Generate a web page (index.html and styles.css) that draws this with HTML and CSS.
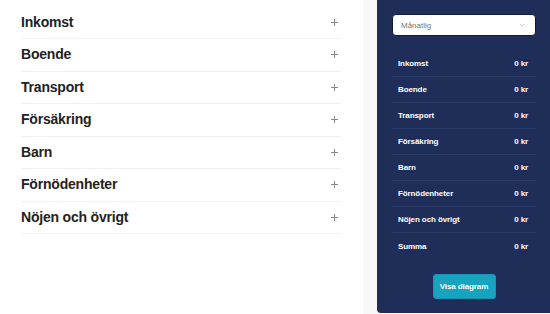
FILE: index.html
```html
<!DOCTYPE html>
<html lang="sv">
<head>
<meta charset="utf-8">
<link rel="stylesheet" href="styles.css">
</head>
<body>
<div class="layout">
  <main class="categories">
    <div class="category"><span>Inkomst</span><svg class="plus" viewBox="0 0 7 7"><path d="M3.5 0v7M0 3.5h7"/></svg></div>
    <div class="category"><span>Boende</span><svg class="plus" viewBox="0 0 7 7"><path d="M3.5 0v7M0 3.5h7"/></svg></div>
    <div class="category"><span>Transport</span><svg class="plus" viewBox="0 0 7 7"><path d="M3.5 0v7M0 3.5h7"/></svg></div>
    <div class="category"><span>Försäkring</span><svg class="plus" viewBox="0 0 7 7"><path d="M3.5 0v7M0 3.5h7"/></svg></div>
    <div class="category"><span>Barn</span><svg class="plus" viewBox="0 0 7 7"><path d="M3.5 0v7M0 3.5h7"/></svg></div>
    <div class="category"><span>Förnödenheter</span><svg class="plus" viewBox="0 0 7 7"><path d="M3.5 0v7M0 3.5h7"/></svg></div>
    <div class="category"><span>Nöjen och övrigt</span><svg class="plus" viewBox="0 0 7 7"><path d="M3.5 0v7M0 3.5h7"/></svg></div>
  </main>
  <aside class="sidebar">
    <div class="summary">
      <div class="period">
        <span>Månatlig</span>
        <svg class="chevron" viewBox="0 0 8 5"><path d="M1 1l3 3 3-3"/></svg>
      </div>
      <ul class="totals">
        <li><span>Inkomst</span><span>0 kr</span></li>
        <li><span>Boende</span><span>0 kr</span></li>
        <li><span>Transport</span><span>0 kr</span></li>
        <li><span>Försäkring</span><span>0 kr</span></li>
        <li><span>Barn</span><span>0 kr</span></li>
        <li><span>Förnödenheter</span><span>0 kr</span></li>
        <li><span>Nöjen och övrigt</span><span>0 kr</span></li>
        <li class="sum"><span>Summa</span><span>0 kr</span></li>
      </ul>
      <div class="actions">
        <button class="chart-btn">Visa diagram</button>
      </div>
    </div>
  </aside>
</div>
</body>
</html>
```

FILE: styles.css
```css
body {
    margin: 0;
    font-family: 'Liberation Sans', Arial, sans-serif;
    color: #222;
    background: #fff;
}
.layout {
    display: flex;
    height: 314px;
}

/* left list of categories */
.categories {
    width: 320px;
    padding: 6.5px 22px 0 21px;
}
.category {
    display: flex;
    align-items: center;
    justify-content: space-between;
    padding: 7.25px 0;
    line-height: 17px;
    border-bottom: 1px solid #f0f0f0;
    font-size: 14px;
    font-weight: bold;
    letter-spacing: -0.2px;
    color: #222;
}
.plus {
    width: 7px;
    height: 7px;
    margin-right: 3px;
    stroke: #888;
    stroke-width: 1;
    fill: none;
}

/* right summary panel */
.sidebar {
    flex: 1;
    background: #f8f8f8;
    padding-left: 14px;
}
.summary {
    height: 313px;
    box-sizing: border-box;
    background: #1f2e59;
    border-bottom-left-radius: 4px;
    padding: 14px 14px 0 15px;
    color: #fff;
}
.period {
    display: flex;
    align-items: center;
    justify-content: space-between;
    height: 22px;
    box-sizing: border-box;
    padding: 0 10px 0 8px;
    background: #fff;
    border: 1px solid #0f1838;
    border-radius: 4px;
    font-size: 8px;
    color: #777;
}
.chevron {
    width: 6px;
    height: 4px;
    stroke: #aaa;
    stroke-width: 1;
    fill: none;
}
.totals {
    list-style: none;
    margin: 15px 0 0 0;
    padding: 0;
}
.totals li {
    display: flex;
    justify-content: space-between;
    align-items: center;
    height: 26px;
    box-sizing: border-box;
    padding: 0 8px 0 6px;
    border-bottom: 1px solid #2c3c68;
    font-size: 8px;
    font-weight: bold;
    letter-spacing: -0.1px;
}
.totals li.sum {
    border-bottom: none;
}
.actions {
    display: flex;
    justify-content: center;
    padding-top: 15px;
}
.chart-btn {
    width: 63px;
    height: 25px;
    background: #18a3bf;
    border: 1px solid #1496b0;
    border-radius: 3px;
    color: #fff;
    font-family: 'Liberation Sans', Arial, sans-serif;
    font-size: 8px;
    font-weight: bold;
    letter-spacing: -0.1px;
    padding: 0;
}
```
